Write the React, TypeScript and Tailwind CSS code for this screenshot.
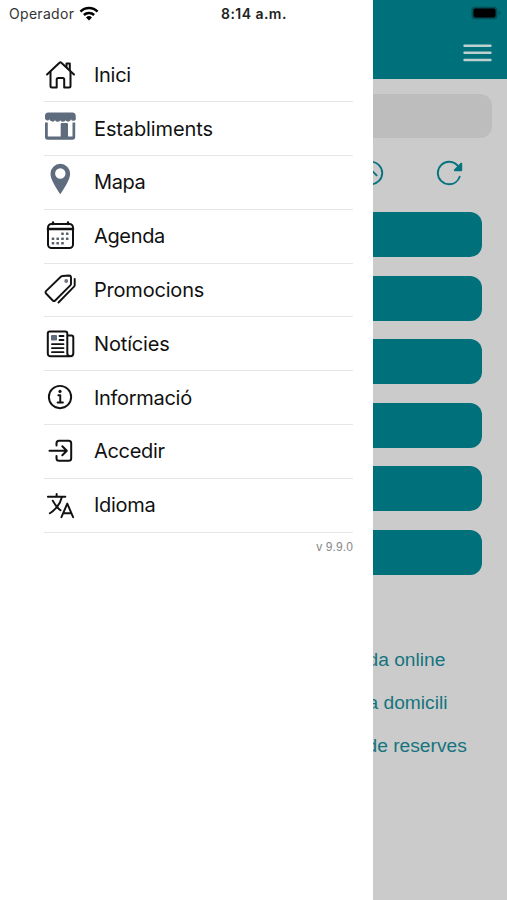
import {
  IoInformationCircleOutline,
  IoLanguageOutline,
  IoReloadOutline,
  IoChevronUpCircleOutline,
} from "react-icons/io5";

function HomeIcon() {
  return (
    <svg viewBox="0 0 32 32" className="w-8 h-8" fill="none" stroke="currentColor" strokeWidth="2" strokeLinecap="round" strokeLinejoin="round">
      <path d="M3 15.500 15.500 3.700q.9-.8 1.800 0L30 15.500" />
      <path d="M6.500 13v14q0 1.500 1.500 1.500h4.700v-8q0-1.500 1.500-1.500h4.500q1.500 0 1.500 1.500v8H25q1.500 0 1.500-1.500V13" />
      <path d="M22.500 8V4.500h3.300v6.500" />
    </svg>
  );
}

function StoreIcon() {
  return (
    <svg viewBox="0 0 32 32" className="w-8 h-8 overflow-visible text-[#5f6c7e]" fill="currentColor">
      <path d="M4.300-.5h24A3.400 3.400 0 0 1 31.700 3v1.500a2.500 2.500 0 0 1-4.700 1.700 3 3 0 0 1-5.500 1 3 3 0 0 1-5.200 0 3 3 0 0 1-5.200 0 3 3 0 0 1-5.500-1A2.500 2.500 0 0 1 1 4.500V3A3.400 3.400 0 0 1 4.300-.5z" />
      <path d="M1 9.500h2.800v14h12.900V11q0-1 1-1H23q1 0 1 1v12.500h4.500v-14h2.700V24a2.800 2.800 0 0 1-2.800 2.800H3.800A2.800 2.800 0 0 1 1 24z" />
    </svg>
  );
}

function PinIcon() {
  return (
    <svg viewBox="0 0 32 32" className="w-8 h-8 overflow-visible text-[#5f6c7e]" fill="currentColor" fillRule="evenodd">
      <path d="M16.300-2.200a9.800 9.800 0 0 0-9.800 9.700c0 5.500 4.300 12.500 9.800 20.700 5.500-8.200 9.800-15.200 9.800-20.700a9.800 9.800 0 0 0-9.800-9.700zm0 4.500a5.200 5.200 0 1 1 0 10.400 5.200 5.200 0 0 1 0-10.400z" />
    </svg>
  );
}

function CalendarIcon() {
  const dots = [
    [18.5, 13.7],
    [23.2, 13.7],
    [9, 18.7],
    [13.7, 18.7],
    [18.5, 18.7],
    [23.2, 18.7],
    [9, 23.3],
    [13.7, 23.3],
    [18.5, 23.3],
  ];

  return (
    <svg viewBox="0 0 32 32" className="w-8 h-8" fill="none" stroke="currentColor" strokeWidth="2" strokeLinecap="round">
      <rect x="4" y="4" width="25" height="24" rx="3.500" />
      <path d="M4 9h25" strokeWidth="2.600" />
      <path d="M9 2.500V4m15-1.500V4" strokeWidth="2.400" />
      {dots.map(([x, y]) => (
        <rect key={`${x}-${y}`} x={x - 1.3} y={y - 1.3} width="2.600" height="2.600" rx=".5" fill="#5b6169" stroke="none" />
      ))}
    </svg>
  );
}

function TagsIcon() {
  return (
    <svg viewBox="0 0 32 32" className="w-8 h-8" fill="none" stroke="currentColor" strokeWidth="1.900" strokeLinecap="round" strokeLinejoin="round">
      <path d="M18.500 2 25 1.500q2 0 2 2v6.200q0 .9-.7 1.600L11.200 26.500q-1.200 1.200-2.400 0L2 19.500q-1-1.200 0-2.400L16.800 2.700q.7-.7 1.700-.7z" />
      <path d="M30.700 5v6q0 .9-.7 1.600L14.500 28.500" />
      <circle cx="22.200" cy="7" r="1.900" fill="#70757d" stroke="none" />
    </svg>
  );
}

function NewsIcon() {
  return (
    <svg viewBox="0 0 32 32" className="w-8 h-8" fill="none" stroke="currentColor" strokeWidth="2" strokeLinecap="round" strokeLinejoin="round">
      <path d="M26.300 28.300H6.500A2.700 2.700 0 0 1 3.800 25.500V5.500q0-2 2-2h15.500q2 0 2 2v19.800q0 3 3 3t3-3V9.500q0-1.900-1.900-1.900h-4" />
      <rect x="7" y="7" width="6" height="5.500" rx=".8" fill="#5f6c7e" stroke="none" />
      <path d="M15.500 8h4M15.500 12h4M8 16.200h11.500M8 20.200h11.500M8 24.200h11.500" strokeWidth="1.800" />
    </svg>
  );
}

function EnterIcon() {
  return (
    <svg viewBox="0 0 32 32" className="w-8 h-8" fill="none" stroke="currentColor" strokeWidth="2" strokeLinecap="round" strokeLinejoin="round">
      <path d="M12.500 10.500V8.300a2.500 2.500 0 0 1 2.500-2.500h9.700a2.500 2.500 0 0 1 2.500 2.500v15a2.500 2.500 0 0 1-2.500 2.500H15a2.500 2.500 0 0 1-2.500-2.500v-2.200" />
      <path d="M5.500 15.800h17M18.300 11.300l4.500 4.500-4.500 4.500" />
    </svg>
  );
}

function WifiIcon() {
  return (
    <svg viewBox="0 0 20 15" className="w-5 h-[15px]" fill="none" stroke="currentColor" strokeWidth="2.500">
      <path d="M1.500 5.600a12 12 0 0 1 17 0" />
      <path d="M4.900 9a7.200 7.200 0 0 1 10.200 0" />
      <path d="M10 14.400 7 11.400a4.300 4.300 0 0 1 6 0z" fill="currentColor" stroke="none" />
    </svg>
  );
}

const menuItems = [
  { label: "Inici", icon: <HomeIcon />, text: "tracking-[-0.3px]" },
  { label: "Establiments", icon: <StoreIcon />, text: "tracking-[-0.12px]" },
  { label: "Mapa", icon: <PinIcon />, text: "tracking-[-0.4px]" },
  { label: "Agenda", icon: <CalendarIcon />, text: "tracking-[-0.35px]" },
  { label: "Promocions", icon: <TagsIcon />, text: "tracking-[-0.2px]" },
  { label: "Notícies", icon: <NewsIcon />, text: "tracking-[-0.15px]" },
  { label: "Informació", icon: <IoInformationCircleOutline className="w-[31px] h-[31px]" />, text: "tracking-[-0.3px]" },
  { label: "Accedir", icon: <EnterIcon />, text: "tracking-[-0.3px]" },
  { label: "Idioma", icon: <IoLanguageOutline className="w-[31px] h-[31px]" />, text: "tracking-[-0.3px]" },
];

const buttons = [1, 2, 3, 4, 5, 6];

function Drawer() {
  return (
    <aside className="w-[372.5px] h-full shrink-0 bg-white">
      <div className="flex items-center h-[27px] pl-[9px] text-[14px] text-[#333]">
        <span className="w-[66px] tracking-[0.3px]">Operador</span>
        <span className="ml-1 text-black">
          <WifiIcon />
        </span>
        <span className="ml-[122px] text-[14px] font-semibold tracking-[0.45px] text-[#222] whitespace-nowrap">8:14 a.m.</span>
      </div>
      <nav className="mt-[21.4px] ml-11 mr-[19.5px]">
        {menuItems.map((item) => (
          <a key={item.label} className="flex items-center h-[53.8px] border-b border-[#e6e6e6] text-[#111]">
            <span className="w-8 mr-[18px] flex justify-center">{item.icon}</span>
            <span className={`text-[20px] leading-6 ${item.text}`}>{item.label}</span>
          </a>
        ))}
        <div className="mt-[6.5px] text-right text-[12px] leading-4 tracking-[0.1px] text-[#888] font-['Liberation_Sans',sans-serif]">v 9.9.0</div>
      </nav>
    </aside>
  );
}

function HomePage() {
  return (
    <main className="flex-1 min-w-0 h-full overflow-hidden bg-[#cbcbcb] font-['Liberation_Sans',sans-serif]">
      <header className="h-[79px] bg-[#00707b] flex flex-col items-end">
        <svg viewBox="0 0 30 14" className="w-[30px] h-[14px] mt-[6px] mr-[6px]">
          <rect x=".5" y=".7" width="26" height="12.600" rx="3.500" fill="#024f57" />
          <rect x="2.500" y="2.500" width="22" height="9" rx="2" fill="#000" />
          <path d="M28 5v4q1.500-.5 1.500-2T28 5z" fill="#024f57" />
        </svg>
        <svg viewBox="0 0 29 18" className="w-[29px] h-[18px] mt-6 mr-[15px]" stroke="#bfd0d1" strokeWidth="2.400" strokeLinecap="round">
          <path d="M1.500 1.700h26M1.500 8.800h26M1.500 16h26" />
        </svg>
      </header>
      <div className="mt-[15px] mr-[15px] h-11 rounded-r-xl bg-[#bdbdbd]" />
      <div className="mt-5 h-[30px] flex items-center text-[#07737e]">
        <IoChevronUpCircleOutline className="w-[30px] h-[30px] -ml-[17px] shrink-0" />
        <IoReloadOutline className="w-[30px] h-[30px] ml-[49px] shrink-0" />
      </div>
      <div className="mt-[24.2px] mr-[25px] flex flex-col gap-[18.5px]">
        {buttons.map((n) => (
          <div key={n} className="h-[45px] rounded-r-xl bg-[#00707b]" />
        ))}
      </div>
      <div className="mt-[71.8px] flex flex-col items-start text-[19.2px] text-[#15747e]">
        <span className="h-[42.7px] -ml-[5px] whitespace-nowrap">da online</span>
        <span className="h-[42.7px] -ml-[5px] whitespace-nowrap">a domicili</span>
        <span className="h-[42.7px] -ml-[6px] whitespace-nowrap">de reserves</span>
      </div>
    </main>
  );
}

export default function App() {
  return (
    <div className="flex w-[507px] h-[900px] overflow-hidden bg-white font-['Inter',sans-serif]">
      <Drawer />
      <HomePage />
    </div>
  );
}
